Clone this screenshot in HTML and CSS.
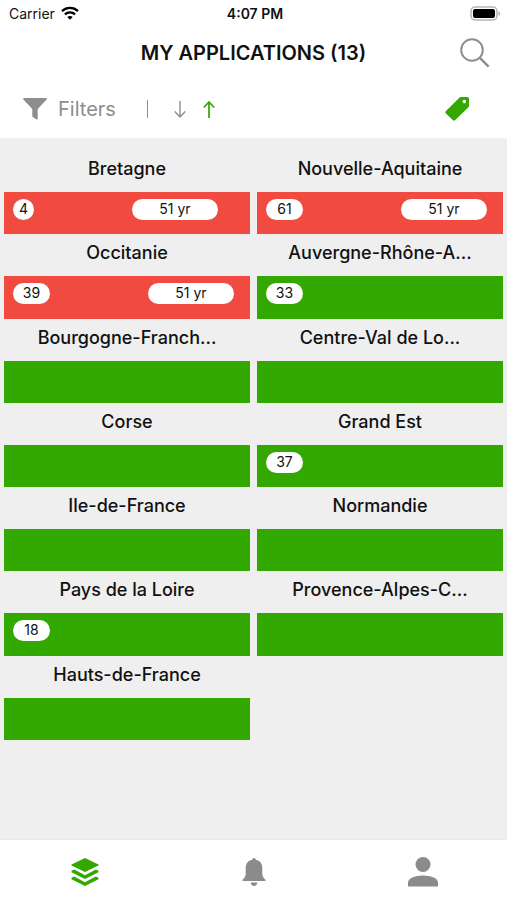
FILE: index.html
```html
<!DOCTYPE html>
<html lang="en">
<head>
<meta charset="utf-8">
<meta name="viewport" content="width=device-width, initial-scale=1">
<title>My applications</title>
<link rel="stylesheet" href="styles.css">
</head>
<body>
<div class="app">
  <div class="status">
    <div class="carrier">
      <span>Carrier</span>
      <svg width="18" height="14" viewBox="0 0 18 14" fill="none" stroke="#000" stroke-width="2.3"><path d="M1 5.1C5.6.9 12.4.9 17 5.1"/><path d="M3.9 8.3c2.9-2.7 7.3-2.7 10.2 0"/><path d="M9 13.7 6.3 11c1.5-1.4 3.9-1.4 5.4 0z" fill="#000" stroke="none"/></svg>
    </div>
    <span class="clock">4:07 PM</span>
    <svg class="battery" width="31" height="15" viewBox="0 0 31 15"><rect x="1" y="1" width="26" height="13" rx="4" fill="#fff" stroke="#b5b5b5" stroke-width="1.5"/><rect x="3" y="3" width="22" height="9" rx="2" fill="#000"/><path d="M28.5 5.2c2.2.6 2.2 4 0 4.6z" fill="#b5b5b5"/></svg>
  </div>
  <header class="titlebar">
    <h1>MY APPLICATIONS (13)</h1>
    <button class="icon-button" type="button" aria-label="Search">
      <svg width="30" height="30" viewBox="0 0 30 30" fill="none" stroke="#8e8e8e" stroke-width="2"><circle cx="12" cy="12" r="10.800"/><path d="M19.600 19.600 28.600 28.600" stroke-width="2.400"/></svg>
    </button>
  </header>
  <div class="toolbar">
    <button class="filters" type="button">
      <svg width="24" height="22" viewBox="0 0 24 22" fill="#8e8e8e"><path d="M.6 0h22.800q.8.800.2 1.600L14.700 11v9.800q-.4.900-1.300.6l-3.500-2.300q-.6-.5-.6-1.200V11L.4 1.600Q-.2.800.6 0z"/></svg>
      <span>Filters</span>
    </button>
    <span class="divider"></span>
    <div class="sorting">
      <button class="icon-button" type="button" aria-label="Sort descending"><svg width="12" height="17" viewBox="0 0 12 17" fill="none" stroke="#8e8e8e" stroke-width="1.400"><path d="M6 0v16M.800 10.500 6 16l5.200-5.500"/></svg></button>
      <button class="icon-button" type="button" aria-label="Sort ascending"><svg width="12" height="17" viewBox="0 0 12 17" fill="none" stroke="#32a800" stroke-width="1.700"><path d="M6 17V1M.800 6.500 6 1l5.200 5.500"/></svg></button>
    </div>
    <button class="icon-button tags" type="button" aria-label="Tags">
      <svg width="26" height="26" viewBox="0 0 26 26" fill="#32a800" fill-rule="evenodd"><path d="M15.600 1.600Q16.200 1 17 1h6.200q1.800 0 1.800 1.800v7q0 .8-.600 1.400L11 24.300q-1 .9-2 0l-7.300-7q-.9-1 0-2zM20.300 3.800a1.800 1.800 0 1 0 0 3.600a1.800 1.800 0 1 0 0-3.600z"/></svg>
    </button>
  </div>
  <main class="content">
    <ul class="regions">
      <li><h2>Bretagne</h2><div class="bar alert"><span class="pill single">4</span><span class="pill age">51 yr</span></div></li>
      <li><h2>Nouvelle-Aquitaine</h2><div class="bar alert"><span class="pill">61</span><span class="pill age">51 yr</span></div></li>
      <li><h2>Occitanie</h2><div class="bar alert"><span class="pill">39</span><span class="pill age">51 yr</span></div></li>
      <li><h2>Auvergne-Rhône-A...</h2><div class="bar"><span class="pill">33</span></div></li>
      <li><h2>Bourgogne-Franch...</h2><div class="bar"></div></li>
      <li><h2>Centre-Val de Lo...</h2><div class="bar"></div></li>
      <li><h2>Corse</h2><div class="bar"></div></li>
      <li><h2>Grand Est</h2><div class="bar"><span class="pill">37</span></div></li>
      <li><h2>Ile-de-France</h2><div class="bar"></div></li>
      <li><h2>Normandie</h2><div class="bar"></div></li>
      <li><h2>Pays de la Loire</h2><div class="bar"><span class="pill">18</span></div></li>
      <li><h2>Provence-Alpes-C...</h2><div class="bar"></div></li>
      <li><h2>Hauts-de-France</h2><div class="bar"></div></li>
    </ul>
  </main>
  <nav class="tabs">
    <a href="#applications" aria-label="Applications" aria-current="page">
      <svg width="28" height="28" viewBox="0 0 28 28" fill="#32a800"><path d="M14 0 27.500 6.600v.8L14 14 .5 7.400v-.8z"/><path d="M.5 14.200v-1.400l2.700-1.200L14 17.200l10.800-5.600 2.700 1.200v1.400L14 21z"/><path d="M.5 21.200v-1.400l2.700-1.200L14 24.200l10.800-5.600 2.700 1.200v1.400L14 28z"/></svg>
    </a>
    <a href="#alerts" aria-label="Alerts">
      <svg width="24" height="30" viewBox="0 0 24 30" fill="#8b8b8b"><path d="M12 1c1.100 0 1.700.8 1.700 1.700C18 3.600 20.300 6.500 20.300 11v5.500c0 3 1.200 4.500 3.200 6.300v1.200H.5v-1.200c2-1.800 3.200-3.300 3.200-6.300V11C3.700 6.500 6 3.600 10.300 2.700 10.300 1.800 10.900 1 12 1z"/><path d="M8.600 25.500h6.800c-.3 2.200-1.600 3.500-3.400 3.500s-3.100-1.300-3.400-3.500z"/></svg>
    </a>
    <a href="#profile" aria-label="Profile">
      <svg width="30" height="30" viewBox="0 0 30 30" fill="#8b8b8b"><circle cx="15" cy="7.500" r="7.500"/><path d="M0 29.500v-3.800C0 21.500 6.500 18.500 15 18.500s15 3 15 7.200v3.800z"/></svg>
    </a>
  </nav>
</div>
</body>
</html>
```
FILE: styles.css
```css
* {
  box-sizing: border-box;
}

body {
  margin: 0;
  background: #fff;
  color: #111;
  font-family: Inter, "Liberation Sans", sans-serif;
}

h1,
h2,
ul {
  margin: 0;
  padding: 0;
}

svg {
  display: block;
}

button {
  margin: 0;
  padding: 0;
  border: 0;
  background: none;
  font: inherit;
  color: inherit;
  cursor: pointer;
}

.app {
  display: flex;
  flex-direction: column;
  min-height: 100vh;
}

.status {
  display: grid;
  grid-template-columns: 1fr auto 1fr;
  align-items: center;
  height: 26px;
  padding: 0 6px 0 9px;
  font-size: 14px;
}

.carrier {
  display: flex;
  align-items: center;
  gap: 6px;
}

.clock {
  font-weight: 600;
}

.battery {
  justify-self: end;
}

.titlebar {
  display: grid;
  grid-template-columns: 1fr auto 1fr;
  align-items: center;
  height: 54px;
  padding: 0 17px;
}

.titlebar h1 {
  grid-column: 2;
  font-size: 20px;
  font-weight: 600;
  line-height: 24px;
}

.titlebar .icon-button {
  justify-self: end;
}

.toolbar {
  display: flex;
  align-items: center;
  height: 58px;
  padding: 0 37px 0 23px;
  color: #8e8e8e;
}

.filters {
  display: flex;
  align-items: center;
  gap: 11px;
  font-size: 20px;
}

.divider {
  width: 1px;
  height: 18px;
  margin: 0 26px 0 31px;
  background: #8e8e8e;
}

.sorting {
  display: flex;
  gap: 17px;
}

.tags {
  margin-left: auto;
}

.content {
  flex: 1;
  padding: 12px 4px 24px;
  background: #efefef;
}

.regions {
  display: grid;
  grid-template-columns: 1fr 1fr;
  column-gap: 7px;
  list-style: none;
}

.regions h2 {
  height: 42px;
  font-size: 18px;
  font-weight: 500;
  line-height: 38px;
  text-align: center;
  white-space: nowrap;
}

.bar {
  display: flex;
  align-items: flex-start;
  gap: 98px;
  aspect-ratio: 64 / 11;
  padding: 7px 9px;
  background: #32a800;
}

.bar.alert {
  background: #f04a41;
}

.pill {
  width: 37px;
  padding-bottom: 2px;
  border-radius: 11px;
  background: #fff;
  font-size: 14px;
  line-height: 19px;
  text-align: center;
}

.pill.single {
  width: 21px;
}

.pill.age {
  width: 86px;
}

.tabs {
  display: grid;
  grid-template-columns: repeat(3, 1fr);
  height: 61px;
  border-top: 1px solid #e8e8e8;
}

.tabs a {
  display: flex;
  align-items: center;
  justify-content: center;
  padding-top: 4px;
}
```
